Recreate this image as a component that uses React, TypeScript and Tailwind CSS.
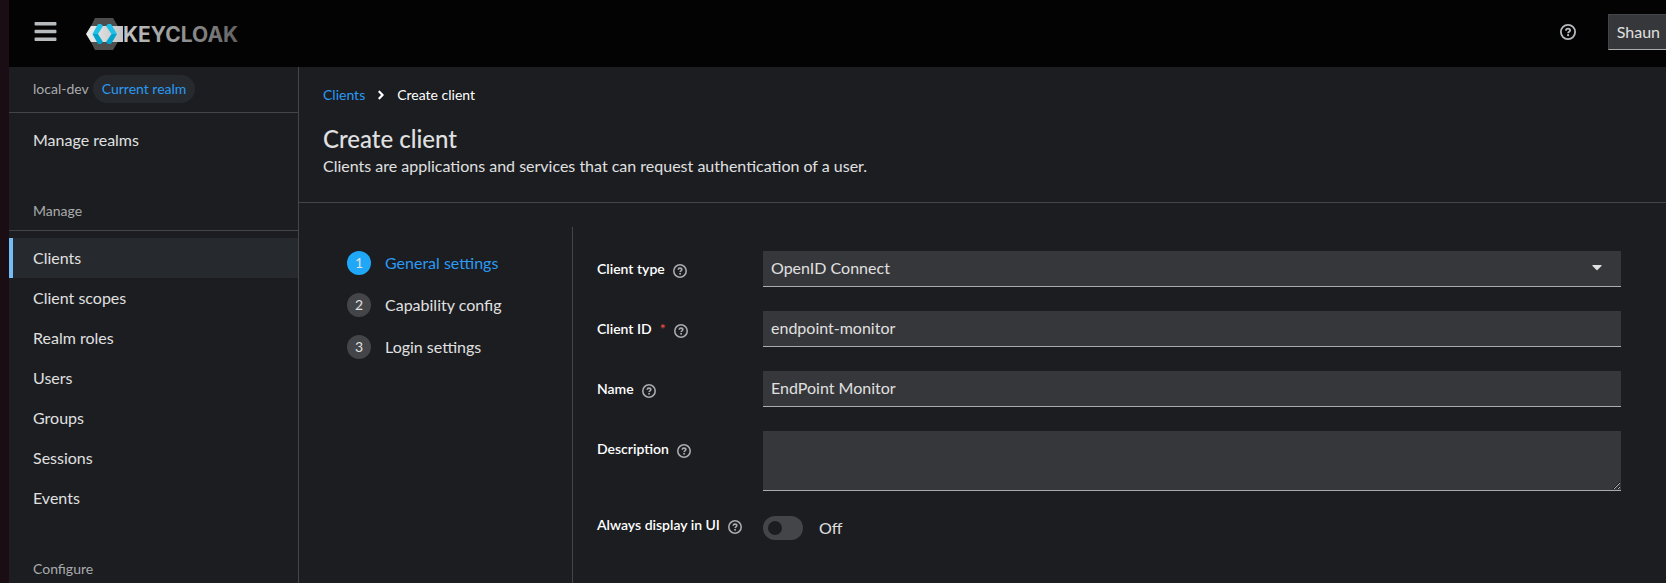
import { useState } from 'react';
import { FaAngleRight, FaBars, FaCaretDown } from 'react-icons/fa';
import { clsx } from 'clsx';

const MANAGE_ITEMS = ['Clients', 'Client scopes', 'Realm roles', 'Users', 'Groups', 'Sessions', 'Events'];
const STEPS = ['General settings', 'Capability config', 'Login settings'];

function HelpIcon({ size }: { size: number }) {
  return (
    <svg width={size} height={size} viewBox="0 0 16 16" fill="none" stroke="currentColor">
      <circle cx="8" cy="8" r="7.1" strokeWidth="1.8" />
      <path d="M5.9 6.6C6 5.3 6.8 4.7 8 4.7s2.1.7 2.1 1.7c0 1.3-2 1.4-2 2.8" strokeWidth="1.8" />
      <circle cx="8.1" cy="11.2" r="1.1" fill="currentColor" stroke="none" />
    </svg>
  );
}

function Logo() {
  return (
    <a href="#home" aria-label="Keycloak" className="flex items-center">
      <svg width="160" height="32" viewBox="0 0 160 32">
        <defs>
          <linearGradient id="band" x1="0" y1="0" x2="1" y2="0">
            <stop offset="0" stopColor="#ececec" />
            <stop offset="1" stopColor="#c4c4c4" />
          </linearGradient>
          <linearGradient id="word" x1="0" y1="0" x2="1" y2="0">
            <stop offset="0" stopColor="#c4c4c4" />
            <stop offset="1" stopColor="#636363" />
          </linearGradient>
        </defs>
        <path d="M9 0h18l6 10v12l-6 10H9L2 18v-4z" fill="#4d4d4d" />
        <path d="M5 8h32v16H5L0 16z" fill="url(#band)" />
        <path d="M12 6h3l2 2-5 8H6.500z" fill="#1fc0e8" />
        <path d="M6.500 16H12l5 8-2 2h-3z" fill="#00a3cc" />
        <path d="M22 6h3l6 10h-5.500L20 8z" fill="#1fc0e8" />
        <path d="M31 16l-6 10h-3l-2-2 5.500-8z" fill="#00a3cc" />
        <text x="37" y="24" fontFamily="Inter, sans-serif" fontWeight="700" fontSize="21" fill="url(#word)">
          KEYCLOAK
        </text>
      </svg>
    </a>
  );
}

function Header() {
  return (
    <header className="flex h-[67px] shrink-0 items-center justify-between bg-[#030303]">
      <div className="flex items-center pl-6">
        <button type="button" aria-label="Global navigation" className="mr-7 pb-1 text-[#b8bbbe]">
          <FaBars size={25} />
        </button>
        <Logo />
      </div>
      <div className="flex items-center gap-8 pb-1">
        <button type="button" aria-label="Help" className="text-[#b8bbbe]">
          <HelpIcon size={16} />
        </button>
        <button
          type="button"
          className="h-9 border border-r-0 border-[#444548] border-b-[#aaabac] bg-[#36373a] pl-2 pr-1.5 text-base text-[#e0e0e0]"
        >
          Shaun
        </button>
      </div>
    </header>
  );
}

function NavSectionTitle({ children }: { children: string }) {
  return (
    <h2 className="border-b border-[#444548] px-6 pb-2 text-sm leading-[22px] text-[#aaabac]">{children}</h2>
  );
}

function NavItem({ label, active }: { label: string; active?: boolean }) {
  return (
    <li>
      <a
        href="#"
        className={clsx(
          'block border-l-4 py-2 pl-5 text-base text-[#e0e0e0]',
          active ? 'border-[#73bcf7] bg-[#26292d]' : 'border-transparent'
        )}
      >
        {label}
      </a>
    </li>
  );
}

function Sidebar() {
  return (
    <nav aria-label="Realm" className="w-[290px] shrink-0 overflow-hidden border-r border-[#444548]">
      <div className="flex h-[46px] items-center gap-1 border-b border-[#444548] px-6 pb-0.5 text-sm text-[#aaabac]">
        <span>local-dev</span>
        <span className="rounded-full bg-[#26292d] px-[9px] py-1 text-[#2b9af3]">Current realm</span>
      </div>
      <ul className="pt-[7px]">
        <NavItem label="Manage realms" />
      </ul>
      <section className="pt-10">
        <NavSectionTitle>Manage</NavSectionTitle>
        <ul className="pt-[7px]">
          {MANAGE_ITEMS.map((item) => (
            <NavItem key={item} label={item} active={item === 'Clients'} />
          ))}
        </ul>
      </section>
      <section className="pt-10">
        <NavSectionTitle>Configure</NavSectionTitle>
      </section>
    </nav>
  );
}

interface FieldLabelProps {
  htmlFor: string;
  label: string;
  required?: boolean;
  className?: string;
}

function FieldLabel({ htmlFor, label, required, className = 'pt-2' }: FieldLabelProps) {
  return (
    <div className={clsx('flex items-center gap-2', className)}>
      <label htmlFor={htmlFor} className="text-sm font-semibold text-white">
        {label}
        {required && <span className="ml-2 font-normal text-[#fe5142]">*</span>}
      </label>
      <button type="button" aria-label={`Help for ${label}`} className="pt-1 text-[#aaabac]">
        <HelpIcon size={14} />
      </button>
    </div>
  );
}

const fieldClass =
  'block w-full rounded-none border-b border-[#aaabac] bg-[#36373a] px-2 text-base text-[#e0e0e0] focus:outline-none';

function GeneralSettings() {
  const [clientId, setClientId] = useState('endpoint-monitor');
  const [name, setName] = useState('EndPoint Monitor');
  const [description, setDescription] = useState('');
  const [alwaysDisplay, setAlwaysDisplay] = useState(false);

  return (
    <form className="grid flex-1 grid-cols-[150px_1fr] content-start items-start gap-x-4 gap-y-6 py-6 pl-6 pr-[45px]">
      <FieldLabel htmlFor="type" label="Client type" />
      <div className="relative">
        <select id="type" className={clsx(fieldClass, 'h-9 appearance-none pb-0.5')}>
          <option>OpenID Connect</option>
          <option>SAML</option>
        </select>
        <FaCaretDown size={16} className="pointer-events-none absolute right-4 top-2 text-[#e0e0e0]" />
      </div>

      <FieldLabel htmlFor="clientId" label="Client ID" required />
      <input
        id="clientId"
        value={clientId}
        onChange={(e) => setClientId(e.target.value)}
        className={clsx(fieldClass, 'h-9 pb-0.5')}
      />

      <FieldLabel htmlFor="name" label="Name" />
      <input
        id="name"
        value={name}
        onChange={(e) => setName(e.target.value)}
        className={clsx(fieldClass, 'h-9 pb-0.5')}
      />

      <FieldLabel htmlFor="description" label="Description" />
      <textarea
        id="description"
        value={description}
        onChange={(e) => setDescription(e.target.value)}
        className={clsx(fieldClass, 'h-15 resize-y')}
      />

      <FieldLabel htmlFor="alwaysDisplay" label="Always display in UI" className="pt-0" />
      <label className="flex items-center gap-4 pt-px text-base text-[#e0e0e0]">
        <input
          id="alwaysDisplay"
          type="checkbox"
          role="switch"
          checked={alwaysDisplay}
          onChange={(e) => setAlwaysDisplay(e.target.checked)}
          className="peer sr-only"
        />
        <span className="flex h-6 w-10 items-center rounded-full bg-[#444548] px-[5px] peer-checked:justify-end peer-checked:bg-[#2b9af3]">
          <span className="size-[14px] rounded-full bg-[#1b1d21]" />
        </span>
        {alwaysDisplay ? 'On' : 'Off'}
      </label>
    </form>
  );
}

function WizardNav() {
  return (
    <nav aria-label="Wizard steps" className="w-[274px] shrink-0 border-r border-[#444548] pl-12 pt-6">
      <ol className="flex flex-col gap-[18px]">
        {STEPS.map((step, i) => (
          <li key={step}>
            <button
              type="button"
              className={clsx('flex items-center gap-[14px] text-base', i === 0 ? 'text-[#2b9af3]' : 'text-[#e0e0e0]')}
            >
              <span
                className={clsx(
                  'flex size-6 items-center justify-center rounded-full text-sm text-[#e0e0e0]',
                  i === 0 ? 'bg-[#1fa7f8]' : 'bg-[#444548]'
                )}
              >
                {i + 1}
              </span>
              {step}
            </button>
          </li>
        ))}
      </ol>
    </nav>
  );
}

export default function App() {
  return (
    <div className="flex h-screen overflow-hidden border-l-9 border-[#1a0d14] bg-[#1b1d21] font-[Lato,sans-serif]">
      <div className="flex min-w-0 flex-1 flex-col">
        <Header />
        <div className="flex min-h-0 flex-1">
          <Sidebar />
          <main className="flex min-w-0 flex-1 flex-col">
            <div className="border-b border-[#444548] px-6 pb-6 pt-[18px]">
              <nav aria-label="Breadcrumb" className="flex items-center gap-[9px] text-sm text-white">
                <a href="#clients" className="text-[#2b9af3]">
                  Clients
                </a>
                <FaAngleRight size={14} />
                <span>Create client</span>
              </nav>
              <h1 className="mt-[18px] text-2xl leading-[31px] font-medium text-[#e0e0e0]">Create client</h1>
              <p className="text-base text-[#e0e0e0]">
                Clients are applications and services that can request authentication of a user.
              </p>
            </div>
            <div className="flex flex-1 pt-6">
              <WizardNav />
              <GeneralSettings />
            </div>
          </main>
        </div>
      </div>
    </div>
  );
}
